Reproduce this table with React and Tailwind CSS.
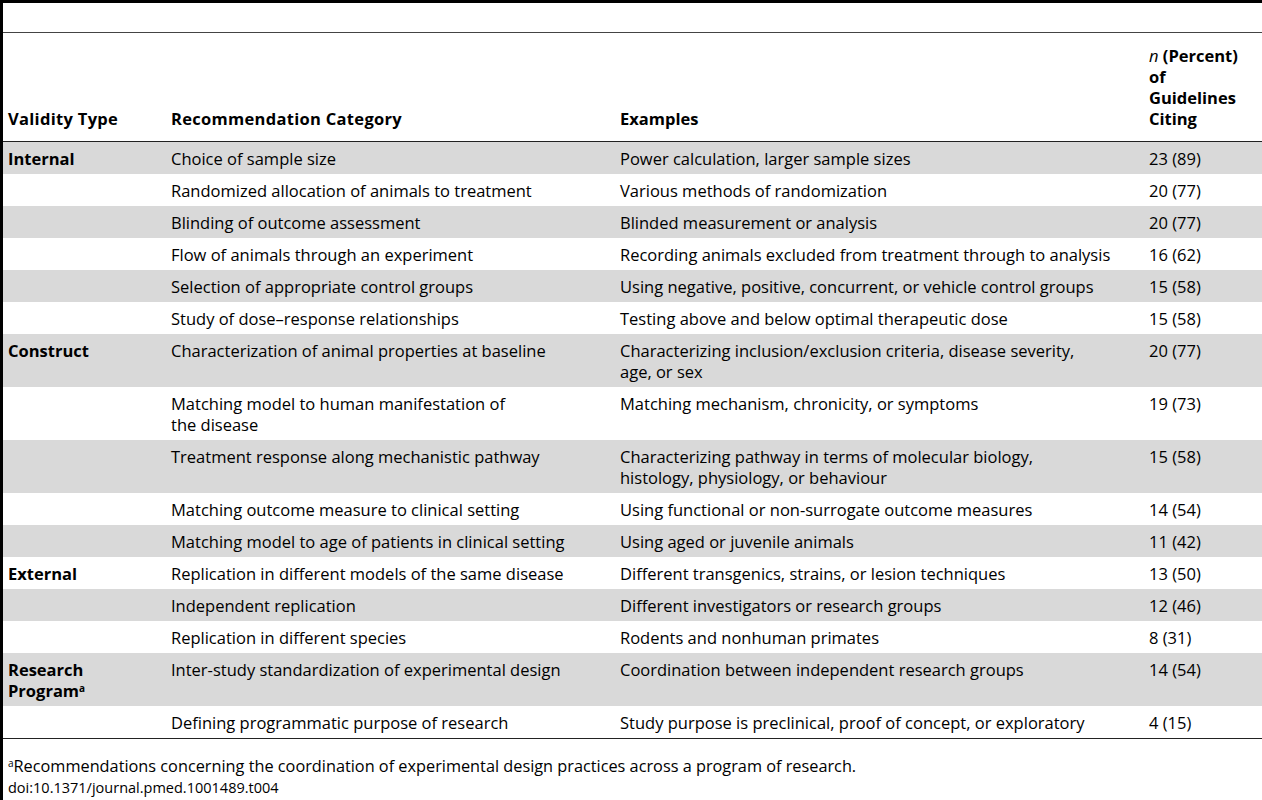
const rows = [
  { type: "Internal", cat: ["Choice of sample size"], ex: ["Power calculation, larger sample sizes"], n: "23 (89)" },
  { cat: ["Randomized allocation of animals to treatment"], ex: ["Various methods of randomization"], n: "20 (77)" },
  { cat: ["Blinding of outcome assessment"], ex: ["Blinded measurement or analysis"], n: "20 (77)" },
  { cat: ["Flow of animals through an experiment"], ex: ["Recording animals excluded from treatment through to analysis"], n: "16 (62)" },
  { cat: ["Selection of appropriate control groups"], ex: ["Using negative, positive, concurrent, or vehicle control groups"], n: "15 (58)" },
  { cat: ["Study of dose\u2013response relationships"], ex: ["Testing above and below optimal therapeutic dose"], n: "15 (58)" },
  { type: "Construct", cat: ["Characterization of animal properties at baseline"], ex: ["Characterizing inclusion/exclusion criteria, disease severity,", "age, or sex"], n: "20 (77)" },
  { cat: ["Matching model to human manifestation of", "the disease"], ex: ["Matching mechanism, chronicity, or symptoms"], n: "19 (73)" },
  { cat: ["Treatment response along mechanistic pathway"], ex: ["Characterizing pathway in terms of molecular biology,", "histology, physiology, or behaviour"], n: "15 (58)" },
  { cat: ["Matching outcome measure to clinical setting"], ex: ["Using functional or non-surrogate outcome measures"], n: "14 (54)" },
  { cat: ["Matching model to age of patients in clinical setting"], ex: ["Using aged or juvenile animals"], n: "11 (42)" },
  { type: "External", cat: ["Replication in different models of the same disease"], ex: ["Different transgenics, strains, or lesion techniques"], n: "13 (50)" },
  { cat: ["Independent replication"], ex: ["Different investigators or research groups"], n: "12 (46)" },
  { cat: ["Replication in different species"], ex: ["Rodents and nonhuman primates"], n: "8 (31)" },
  { type: "research", cat: ["Inter-study standardization of experimental design"], ex: ["Coordination between independent research groups"], n: "14 (54)" },
  { cat: ["Defining programmatic purpose of research"], ex: ["Study purpose is preclinical, proof of concept, or exploratory"], n: "4 (15)" },
];

function Lines({ items }) {
  return items.map((t, i) => (
    <span key={i} className="block whitespace-nowrap">{t}</span>
  ));
}

export default function App() {
  return (
    <div className="min-h-[800px] bg-white border-t-[3px] border-l-[3px] border-black text-black font-['Open_Sans','Noto_Sans',sans-serif] text-[16.5px] leading-[21px]">
      <div className="h-[30px] border-b border-[#444]"></div>

      {/* header */}
      <div className="grid grid-cols-[163px_449px_529px_1fr] items-end font-bold border-b border-[#222] py-3">
        <div className="pl-[5px] tracking-[0.3px]">Validity Type</div>
        <div className="pl-[5px] tracking-[0.3px]">Recommendation Category</div>
        <div className="pl-[5px]">Examples</div>
        <div className="pl-[5px]">
          <span className="font-normal italic">n</span> (Percent)<br />of<br />Guidelines<br />Citing
        </div>
      </div>

      {/* body */}
      <div className="border-b border-[#222]">
        {rows.map((r, i) => (
          <div
            key={i}
            className={
              "grid grid-cols-[163px_449px_529px_1fr] py-[5.5px] " +
              (i % 2 === 0 ? "bg-[#d9d9d9]" : "bg-white")
            }
          >
            <div className="pl-[5px] font-bold">
              {r.type === "research" ? (
                <>
                  Research<br />Program<sup className="text-[10px]">a</sup>
                </>
              ) : (
                r.type
              )}
            </div>
            <div className="pl-[5px]"><Lines items={r.cat} /></div>
            <div className="pl-[5px]"><Lines items={r.ex} /></div>
            <div className="pl-[5px]">{r.n}</div>
          </div>
        ))}
      </div>

      {/* footnotes */}
      <div className="pt-4 pl-[5px] leading-[22px]">
        <p className="text-[16.3px]"><sup className="text-[10px]">a</sup>Recommendations concerning the coordination of experimental design practices across a program of research.</p>
        <p className="text-[14.5px]">doi:10.1371/journal.pmed.1001489.t004</p>
      </div>
    </div>
  );
}
